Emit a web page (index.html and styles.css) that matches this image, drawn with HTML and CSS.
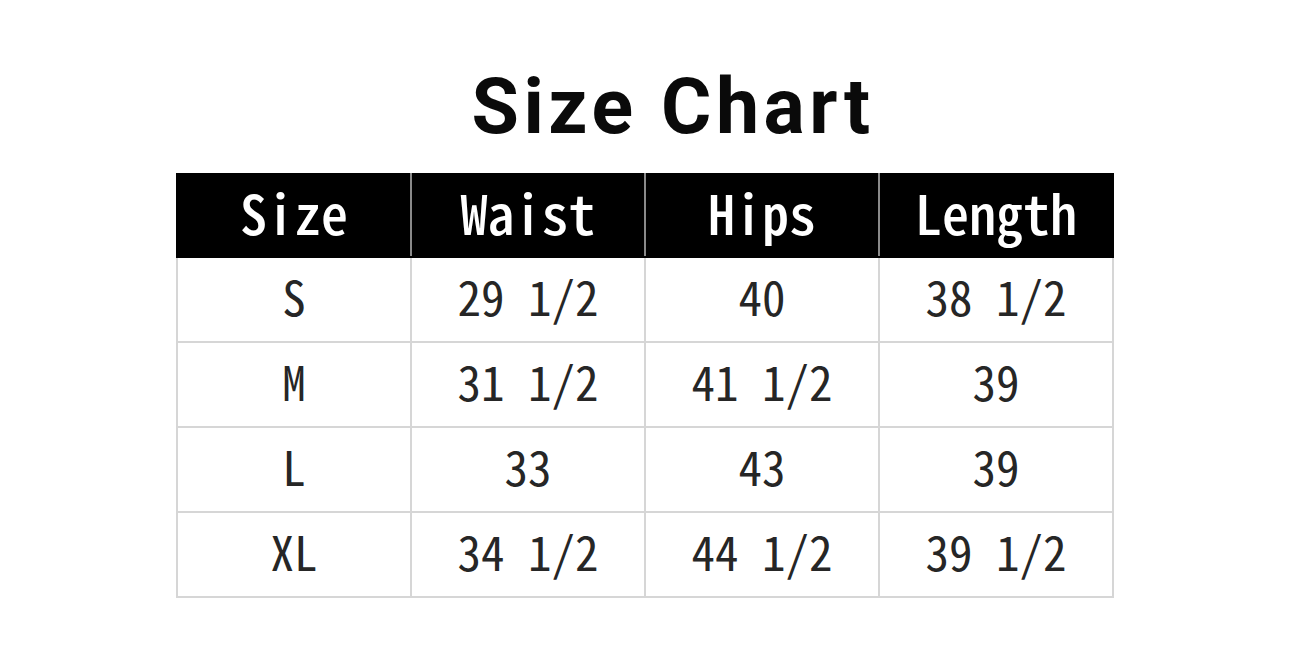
FILE: index.html
```html
<!DOCTYPE html>
<html lang="en">
<head>
<meta charset="utf-8">
<title>Size Chart</title>
<link rel="stylesheet" href="styles.css">
</head>
<body>
<main class="page">
  <h1 class="title">Size Chart</h1>
  <table class="chart">
    <thead>
      <tr><th>Size</th><th>Waist</th><th>Hips</th><th>Length</th></tr>
    </thead>
    <tbody>
      <tr><td>S</td><td>29 1/2</td><td>40</td><td>38 1/2</td></tr>
      <tr><td>M</td><td>31 1/2</td><td>41 1/2</td><td>39</td></tr>
      <tr><td>L</td><td>33</td><td>43</td><td>39</td></tr>
      <tr><td>XL</td><td>34 1/2</td><td>44 1/2</td><td>39 1/2</td></tr>
    </tbody>
  </table>
</main>
</body>
</html>
```
FILE: styles.css
```css
html, body {
  margin: 0;
  padding: 0;
  background: #ffffff;
}
.page {
  width: 1290px;
  height: 672px;
  display: flex;
  flex-direction: column;
  align-items: center;
  padding-top: 69px;
  box-sizing: border-box;
}
.title {
  margin: 0 0 27px 56px;
  font-family: Roboto, "Liberation Sans", sans-serif;
  font-weight: 700;
  font-size: 77px;
  line-height: 77px;
  letter-spacing: 4.5px;
  color: #0a0a0a;
}
.chart {
  border-collapse: collapse;
  width: 938px;
  table-layout: fixed;
  font-family: "Noto Sans CJK SC", sans-serif;
  font-feature-settings: "hwid" 1;
}
.chart th,
.chart td {
  border: 2px solid #d6d6d6;
  text-align: center;
  vertical-align: middle;
  padding: 0;
  white-space: pre;
}
.chart th {
  height: 73px;
  padding-bottom: 8px;
  background: #000;
  color: #fff;
  font-size: 54px;
  font-weight: 500;
  line-height: 1;
  border-color: #000 #8a8a8a #000 #8a8a8a;
}
.chart th:first-child { border-left-color: #000; }
.chart th:last-child { border-right-color: #000; }
.chart td {
  height: 75px;
  padding-bottom: 8px;
  color: #262626;
  font-size: 47px;
  font-weight: 400;
  line-height: 1;
}
```
